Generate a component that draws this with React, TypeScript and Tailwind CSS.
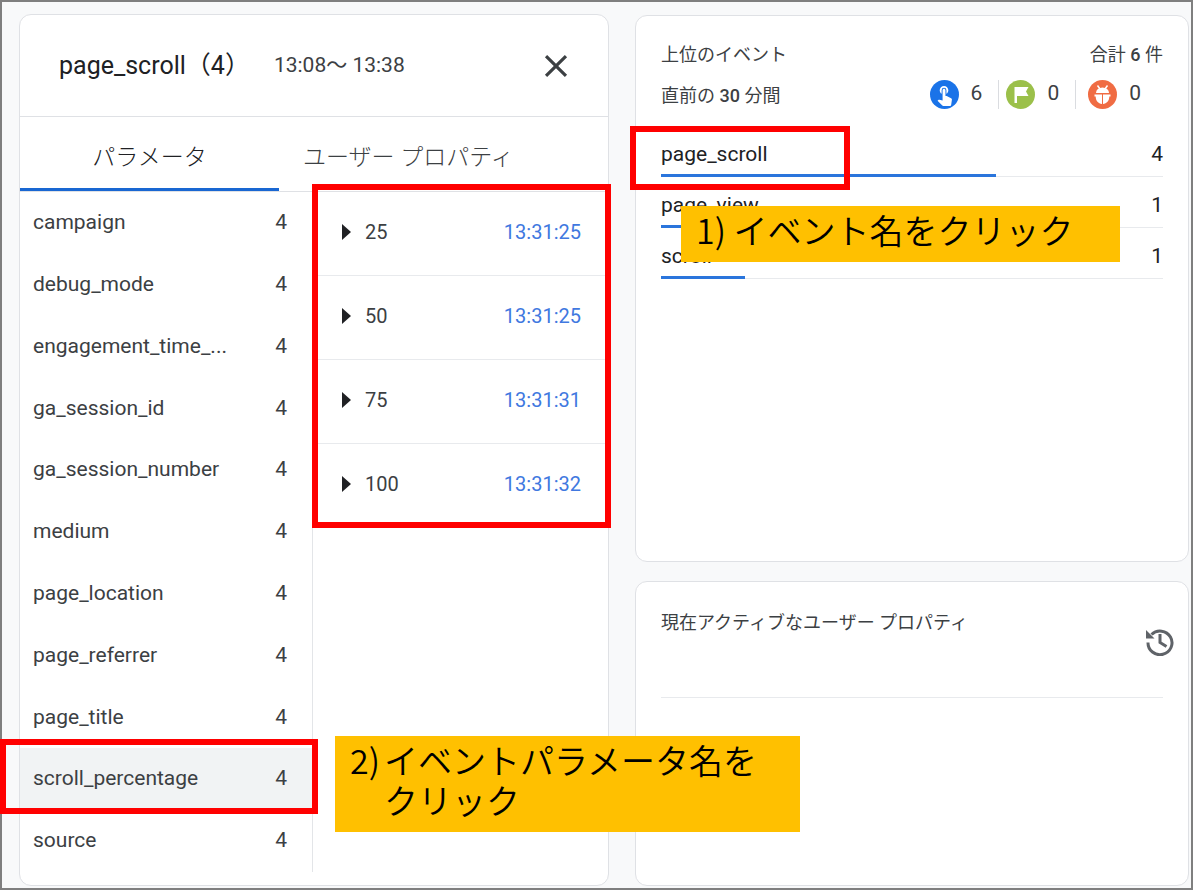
import { useState } from 'react';
import { MdClose, MdTouchApp } from 'react-icons/md';

const params = [
    { name: 'campaign', count: 4 },
    { name: 'debug_mode', count: 4 },
    { name: 'engagement_time_...', count: 4 },
    { name: 'ga_session_id', count: 4 },
    { name: 'ga_session_number', count: 4 },
    { name: 'medium', count: 4 },
    { name: 'page_location', count: 4 },
    { name: 'page_referrer', count: 4 },
    { name: 'page_title', count: 4 },
    { name: 'scroll_percentage', count: 4 },
    { name: 'source', count: 4 },
];

const values = [
    { value: '25', time: '13:31:25' },
    { value: '50', time: '13:31:25' },
    { value: '75', time: '13:31:31' },
    { value: '100', time: '13:31:32' },
];

const events = [
    { name: 'page_scroll', count: 4 },
    { name: 'page_view', count: 1 },
    { name: 'scroll', count: 1 },
];

const total = 6;

function FlagIcon() {
    return (
        <svg viewBox="0 0 29 29" className="size-[29px]" aria-hidden="true">
            <circle cx="14.5" cy="14.5" r="14.5" fill="#9bc04a" />
            <path d="M8.5 7H22.5l-2.5 4.5 2.5 4.5H11v7H8.5z" fill="#fff" />
        </svg>
    );
}

function BugIcon() {
    return (
        <svg viewBox="0 0 29 29" className="size-[29px]" aria-hidden="true">
            <circle cx="14.5" cy="14.5" r="14.5" fill="#f06c43" />
            <path d="M9.5 5.5l2.5 3.5M19.5 5.5L17 9" stroke="#fff" strokeWidth="1.5" />
            <path d="M8 13a6.500 5.500 0 0 1 13 0z" fill="#fff" />
            <path d="M6.5 14.500H14V24c-3.700-.3-6.300-3.300-6.300-7.500H6.500zM22.500 14.500H15V24c3.700-.3 6.300-3.300 6.300-7.500h1.200z" fill="#fff" />
        </svg>
    );
}

function HistoryIcon() {
    return (
        <svg viewBox="0 0 28 28" className="size-7" fill="none" stroke="#5f6368" strokeWidth="3" aria-hidden="true">
            <path d="M2 14.500A12 11.800 0 1 0 5.500 6.500" />
            <path d="M0 2l3 3L8.500 10.500H0z" fill="#5f6368" stroke="none" />
            <path d="M14 6v8.500l6.500 4" />
        </svg>
    );
}

export default function App() {
    const [selected, setSelected] = useState('scroll_percentage');

    return (
        <div className="min-h-screen grid grid-cols-[590fr_554fr] gap-[26px] pt-3 pb-0.5 pl-[17px] pr-0.5 border-2 border-[#7f7f7f] bg-[#f8f9fa] text-[#3c4043] text-[21px] font-['Roboto','Noto_Sans_CJK_JP',sans-serif]">
            {/* Event detail */}
            <section className="flex flex-col bg-white border border-[#dfe1e5] rounded-xl pb-[13px]">
                <header className="flex items-center h-[102px] pl-[39px] pr-[33px] border-b border-[#dfe1e5]">
                    <h1 className="text-[25px] text-[#202124]">page_scroll（4）</h1>
                    <span className="ml-6">13:08〜 13:38</span>
                    <button aria-label="閉じる" className="ml-auto">
                        <MdClose size={38} />
                    </button>
                </header>

                <div role="tablist" className="flex h-[75px] border-b border-[#dfe1e5] text-[23px] font-light">
                    <button role="tab" aria-selected="true" className="w-[259px] border-b-3 border-[#1967d2] pt-3 text-[#202124]">パラメータ</button>
                    <button role="tab" aria-selected="false" className="px-6 border-b-3 border-transparent pt-3">ユーザー プロパティ</button>
                </div>

                <div className="flex-1 grid grid-cols-[293fr_295fr]">
                    <ul className="flex flex-col border-r border-[#e3e5e8]">
                        {params.map((p) => (
                            <li key={p.name} className="relative flex-1 flex">
                                <button
                                    onClick={() => setSelected(p.name)}
                                    className={`flex-1 flex items-center justify-between pl-[13px] pr-[25px] ${selected === p.name ? 'bg-[#f1f3f4]' : ''}`}
                                >
                                    <span>{p.name}</span>
                                    <span>{p.count}</span>
                                </button>
                                {selected === p.name && (
                                    <div className="absolute -left-5 -right-1.5 -top-[9px] -bottom-1 border-6 border-[#ff0000] pointer-events-none" />
                                )}
                            </li>
                        ))}
                    </ul>

                    <div className="relative self-start">
                        <ul className="divide-y divide-[#e8eaed] text-[20px]">
                            {values.map((v) => (
                                <li key={v.value} className="flex items-center h-[84px] pl-[29px] pr-[27px] pb-1">
                                    <button aria-label="開く" className="w-[23px]">
                                        <svg viewBox="0 0 9 16" className="w-[9px] h-4" aria-hidden="true">
                                            <path d="M0 0l9 8-9 8z" fill="#202124" />
                                        </svg>
                                    </button>
                                    <span>{v.value}</span>
                                    <a href="#" className="ml-auto text-[#4078e0]">{v.time}</a>
                                </li>
                            ))}
                        </ul>
                        <div className="absolute -left-px -right-[3px] -top-2 bottom-0 border-6 border-[#ff0000] pointer-events-none" />
                    </div>
                </div>
            </section>

            <div className="grid grid-rows-[547fr_305fr] gap-[19px] pt-px">
                {/* Top events */}
                <section className="bg-white border border-[#dfe1e5] rounded-xl px-[25px] pt-6">
                    <div className="flex items-center justify-between h-7 text-[18px]">
                        <h2>上位のイベント</h2>
                        <p>合計 <b className="font-medium">{total}</b> 件</p>
                    </div>
                    <div className="flex items-center justify-between h-[52px] mb-1.5">
                        <p className="text-[18px] pt-0.5">直前の <b className="font-medium">30</b> 分間</p>
                        <div className="flex items-center mr-[22px]">
                            <span className="flex size-[29px] items-center justify-center rounded-full bg-[#1a73e8] text-white">
                                <MdTouchApp size={23} />
                            </span>
                            <span className="ml-3">6</span>
                            <span className="w-px h-[29px] ml-4 mr-[7px] bg-[#dadce0]" />
                            <FlagIcon />
                            <span className="ml-3">0</span>
                            <span className="w-px h-[29px] ml-4 mr-3 bg-[#dadce0]" />
                            <BugIcon />
                            <span className="ml-3">0</span>
                        </div>
                    </div>

                    <div className="relative">
                        <ul className="text-[#202124]">
                            {events.map((e) => (
                                <li key={e.name} className="relative h-[51px] border-b border-[#e8eaed]">
                                    <button className="flex w-full h-full items-center justify-between pt-[7px]">
                                        <span>{e.name}</span>
                                        <span>{e.count}</span>
                                    </button>
                                    <div className="absolute left-0 -bottom-px h-[3px] bg-[#2a75dc]" style={{ width: `${(e.count / total) * 100}%` }} />
                                </li>
                            ))}
                        </ul>
                        <div className="absolute -left-[31px] top-0 w-[220px] h-16 border-6 border-[#ff0000] pointer-events-none" />
                        <p className="absolute left-5 top-20 w-[439px] h-14 pl-[15px] pt-1 bg-[#ffc000] text-black text-[34px] leading-10 font-[350] font-['Noto_Sans_CJK_JP',sans-serif]">1) イベント名をクリック</p>
                    </div>
                </section>

                {/* Active user properties */}
                <section className="relative bg-white border border-[#dfe1e5] rounded-xl px-[25px]">
                    <div className="flex items-start justify-between h-[116px] pt-[27px] border-b border-[#e8eaed]">
                        <h2 className="text-[18px]">現在アクティブなユーザー プロパティ</h2>
                        <button aria-label="履歴" className="-mr-[11px] mt-[19px]">
                            <HistoryIcon />
                        </button>
                    </div>
                    <div className="absolute right-[388px] top-[154px] flex w-[465px] h-24 gap-1 pl-[15px] pt-1 bg-[#ffc000] text-black text-[34px] leading-10 font-[350] font-['Noto_Sans_CJK_JP',sans-serif]">
                        <span>2)</span>
                        <p>イベントパラメータ名を<br />クリック</p>
                    </div>
                </section>
            </div>
        </div>
    );
}
